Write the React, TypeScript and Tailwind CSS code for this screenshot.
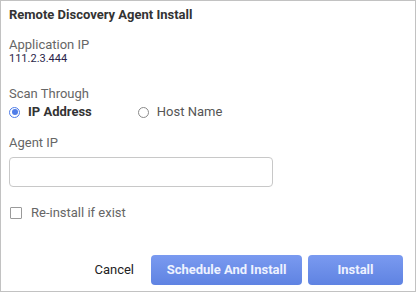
import React from "react";

export default function App() {
  const font = { fontFamily: "Roboto, 'Liberation Sans', sans-serif" };
  return (
    <div className="w-[417px] h-[293px] bg-white">
      <div
        className="w-[416px] h-[292px] border border-[#c2c2c2] bg-white flex flex-col"
        style={font}
      >
        <div className="pl-[8px] pt-[6px] text-[13px] font-bold text-[#333] leading-[16px]">
          Remote Discovery Agent Install
        </div>
        <div className="pl-[8px] mt-[14px] text-[13px] text-[#666] leading-[16px]">
          Application IP
        </div>
        <div className="pl-[8px] mt-[-1px] text-[11px] text-[#2b1f4a] leading-[14px]">
          111.2.3.444
        </div>
        <div className="pl-[8px] mt-[20px] text-[13px] text-[#666] leading-[16px]">
          Scan Through
        </div>
        <div className="pl-[8px] mt-[2px] flex items-center h-[16px] text-[13px] leading-[16px]">
          <span className="w-[11px] h-[11px] rounded-full border border-[#4f7de8] flex items-center justify-center">
            <span className="w-[6px] h-[6px] rounded-full bg-[#4f7de8]" />
          </span>
          <span className="ml-[8px] font-bold text-[#333]">IP Address</span>
          <span className="ml-[46px] w-[11px] h-[11px] rounded-full border border-[#8a8a8a]" />
          <span className="ml-[8px] text-[#555]">Host Name</span>
        </div>
        <div className="pl-[8px] mt-[15px] text-[13px] text-[#666] leading-[16px]">
          Agent IP
        </div>
        <div className="pl-[8px] mt-[6px]">
          <div className="w-[264px] h-[30px] border border-[#c8c8c8] rounded-[4px] bg-white" />
        </div>
        <div className="pl-[9px] mt-[18px] flex items-center h-[16px]">
          <span className="w-[12px] h-[12px] border border-[#9a9a9a] rounded-[1px] bg-white" />
          <span className="ml-[9px] text-[13px] text-[#666] leading-[16px]">Re-install if exist</span>
        </div>
        <div className="flex items-center justify-end mt-[34px] pr-[12px]">
          <span className="text-[13px] text-[#222] leading-[16px] mr-[17px]">Cancel</span>
          <button
            className="w-[151px] h-[30px] rounded-[4px] text-[13px] font-bold text-[#eef2ff] bg-[linear-gradient(#7a9af0,#5f83e2)]"
            style={font}
          >
            Schedule And Install
          </button>
          <button
            className="ml-[6px] w-[95px] h-[30px] rounded-[4px] text-[13px] font-bold text-[#eef2ff] bg-[linear-gradient(#7a9af0,#5f83e2)]"
            style={font}
          >
            Install
          </button>
        </div>
      </div>
    </div>
  );
}
